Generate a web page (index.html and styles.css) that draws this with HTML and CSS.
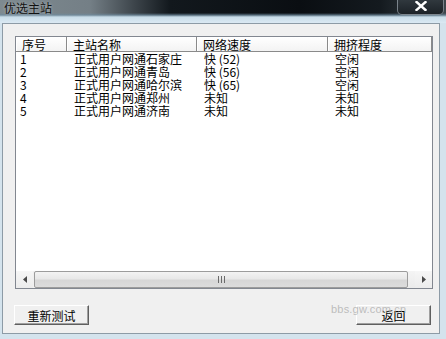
FILE: index.html
```html
<!DOCTYPE html>
<html>
<head>
<meta charset="utf-8">
<link rel="stylesheet" href="styles.css">
</head>
<body>
<div class="window">
  <div class="titlebar">
    <div class="title">优选主站</div>
    <div class="close">
      <svg width="12" height="10" viewBox="0 0 12 10"><path d="M1.5 1 L10.5 9 M10.5 1 L1.5 9" stroke="#fff" stroke-width="2.4" stroke-linecap="square"/></svg>
    </div>
  </div>
  <div class="client">
    <div class="listbox">
      <div class="header">
        <div class="hcell c1">序号</div>
        <div class="hcell c2">主站名称</div>
        <div class="hcell c3">网络速度</div>
        <div class="hcell c4">拥挤程度</div>
      </div>
      <div class="rows">
        <div class="row"><div class="cell c1">1</div><div class="cell c2">正式用户网通石家庄</div><div class="cell c3">快 (52)</div><div class="cell c4">空闲</div></div>
        <div class="row"><div class="cell c1">2</div><div class="cell c2">正式用户网通青岛</div><div class="cell c3">快 (56)</div><div class="cell c4">空闲</div></div>
        <div class="row"><div class="cell c1">3</div><div class="cell c2">正式用户网通哈尔滨</div><div class="cell c3">快 (65)</div><div class="cell c4">空闲</div></div>
        <div class="row"><div class="cell c1">4</div><div class="cell c2">正式用户网通郑州</div><div class="cell c3">未知</div><div class="cell c4">未知</div></div>
        <div class="row"><div class="cell c1">5</div><div class="cell c2">正式用户网通济南</div><div class="cell c3">未知</div><div class="cell c4">未知</div></div>
      </div>
      <div class="hscroll">
        <div class="sbtn"><svg width="4" height="7" viewBox="0 0 4 7"><path d="M4 0 L0 3.5 L4 7 Z" fill="#4a4a4a"/></svg></div>
        <div class="sgap"></div>
        <div class="thumb"><svg width="7" height="7" viewBox="0 0 7 7"><path d="M0.5 0 V7 M3.5 0 V7 M6.5 0 V7" stroke="#6a6a6a" stroke-width="1"/></svg></div>
        <div class="track"></div>
        <div class="sbtn"><svg width="4" height="7" viewBox="0 0 4 7"><path d="M0 0 L4 3.5 L0 7 Z" fill="#4a4a4a"/></svg></div>
      </div>
    </div>
    <div class="buttons">
      <button class="btn">重新测试</button>
      <button class="btn">返回</button>
    </div>
    <div class="watermark">bbs.gw.com.cn</div>
  </div>
</div>
</body>
</html>
```
FILE: styles.css
```css
html, body {
  margin: 0;
  padding: 0;
}
body {
  width: 446px;
  height: 339px;
  overflow: hidden;
  font-family: "Noto Sans CJK SC", "Liberation Sans", sans-serif;
  font-size: 12px;
  color: #000;
}
.window {
  width: 446px;
  height: 339px;
  display: flex;
  flex-direction: column;
  background: #d4e3ed;
}
.titlebar {
  height: 23px;
  flex: none;
  display: flex;
  justify-content: space-between;
  align-items: flex-start;
  background:
    linear-gradient(to bottom, rgba(0,0,0,0) 0, rgba(0,0,0,0) 13px, rgba(110,140,160,0.7) 15px, #c9dde9 17px, #dbe9f3 23px),
    linear-gradient(to right, #7e8a90 0, #747f86 90px, #3c444a 135px, #12181d 170px, #0a0e12 300px, #141a1f 380px, #3e474d 446px);
}
.title {
  padding: 1px 0 0 4px;
  line-height: 14px;
  font-size: 12px;
  color: #111;
  text-shadow: 0 0 3px rgba(255,255,255,0.45);
}
.close {
  width: 47px;
  height: 15px;
  margin-right: 2px;
  box-sizing: border-box;
  border: 1px solid rgba(190,200,210,0.55);
  border-top: 0;
  border-radius: 0 0 5px 5px;
  background: linear-gradient(#30383e, #1c2227);
  display: flex;
  justify-content: center;
  align-items: flex-start;
  padding-top: 1px;
}
.client {
  position: relative;
  flex: 1;
  margin: 0 6px 5px 2px;
  border: 1px solid #8d9ba6;
  background: #f0f0f0;
  padding: 12px 6px 8px 12px;
  display: flex;
  flex-direction: column;
}
.listbox {
  height: 253px;
  box-sizing: border-box;
  border: 1px solid #828790;
  background: #fff;
  display: flex;
  flex-direction: column;
}
.header {
  display: grid;
  grid-template-columns: 51px 130px 131px 1fr;
  height: 15px;
  flex: none;
}
.hcell {
  box-sizing: border-box;
  height: 15px;
  line-height: 14px;
  padding: 1px 0 0 6px;
  background: linear-gradient(#ffffff, #f3f3f3);
  border-bottom: 1px solid #8a8a8a;
  border-right: 1px solid #8a8a8a;
  box-shadow: inset 1px 0 0 #ffffff;
  white-space: nowrap;
}
.hcell.c4 {
  border-right: 1px solid #8a8a8a;
}
.rows {
  flex: 1;
}
.row {
  display: grid;
  grid-template-columns: 51px 130px 131px 1fr;
  height: 13px;
  line-height: 13px;
}
.cell {
  padding-left: 7px;
  white-space: nowrap;
}
.cell.c1 {
  padding-left: 4px;
}
.hscroll {
  height: 17px;
  flex: none;
  display: flex;
  background: #f0f0f0;
}
.sbtn {
  width: 17px;
  height: 17px;
  display: flex;
  justify-content: center;
  align-items: center;
  background: linear-gradient(#f6f6f6, #ececec);
}
.sgap {
  width: 1px;
}
.thumb {
  width: 374px;
  height: 17px;
  box-sizing: border-box;
  border: 1px solid #9c9c9c;
  border-radius: 2px;
  background: linear-gradient(#f3f3f3 0, #e8e8e8 45%, #d6d6d6 55%, #dcdcdc 100%);
  display: flex;
  justify-content: center;
  align-items: center;
}
.track {
  flex: 1;
  background: linear-gradient(#f4f4f4, #ebebeb);
}
.buttons {
  margin-top: 16px;
  display: flex;
  justify-content: space-between;
  padding-left: 0;
  margin-left: -1px;
  margin-right: 2px;
}
.btn {
  width: 75px;
  height: 20px;
  box-sizing: border-box;
  margin: 0;
  padding: 0;
  font-family: "Noto Sans CJK SC", sans-serif;
  font-size: 12px;
  line-height: 17px;
  color: #000;
  background: #f0f0f0;
  border: 1px solid;
  border-color: #ffffff #5f5f5f #5f5f5f #ffffff;
  box-shadow: inset -1px -1px 0 #a0a0a0;
  border-radius: 0;
}
.watermark {
  position: absolute;
  left: 328px;
  top: 279px;
  font-family: "Liberation Sans", sans-serif;
  font-size: 11px;
  line-height: 12px;
  color: rgba(170,170,170,0.75);
  letter-spacing: 0.2px;
}
```
